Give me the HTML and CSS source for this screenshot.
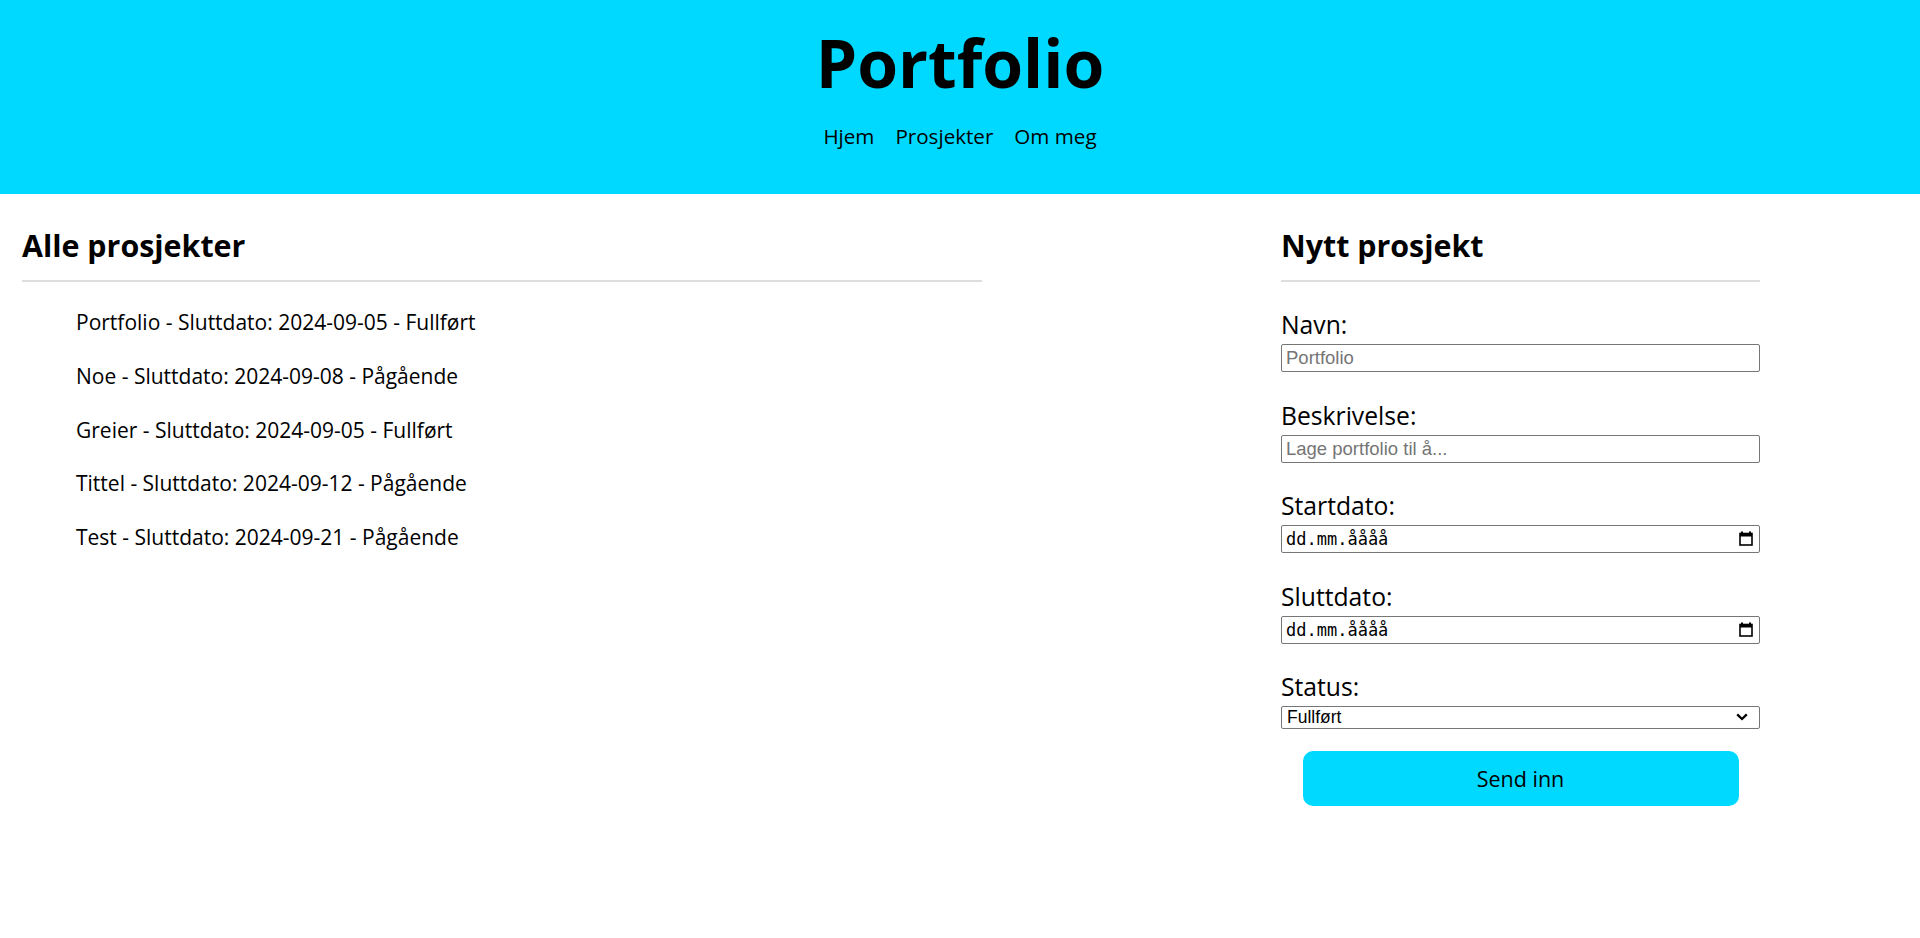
FILE: index.html
```html
<!DOCTYPE html>
<html lang="no">
<head>
<meta charset="utf-8">
<title>Portfolio</title>
<link rel="stylesheet" href="styles.css">
</head>
<body>
<header class="site-header">
  <h1 class="site-title">Portfolio</h1>
  <nav class="site-nav">
    <a class="nav-link" href="#">Hjem</a>
    <a class="nav-link" href="#">Prosjekter</a>
    <a class="nav-link" href="#">Om meg</a>
  </nav>
</header>
<main class="layout">
  <section class="projects">
    <h2 class="section-title">Alle prosjekter</h2>
    <ul class="project-list">
      <li class="project-item">Portfolio - Sluttdato: 2024-09-05 - Fullført</li>
      <li class="project-item">Noe - Sluttdato: 2024-09-08 - Pågående</li>
      <li class="project-item">Greier - Sluttdato: 2024-09-05 - Fullført</li>
      <li class="project-item">Tittel - Sluttdato: 2024-09-12 - Pågående</li>
      <li class="project-item">Test - Sluttdato: 2024-09-21 - Pågående</li>
    </ul>
  </section>
  <section class="new-project">
    <h2 class="section-title">Nytt prosjekt</h2>
    <form class="project-form">
      <div class="field">
        <label class="field-label" for="navn">Navn:</label>
        <input class="text-input" id="navn" type="text" placeholder="Portfolio">
      </div>
      <div class="field">
        <label class="field-label" for="beskrivelse">Beskrivelse:</label>
        <input class="text-input" id="beskrivelse" type="text" placeholder="Lage portfolio til å...">
      </div>
      <div class="field">
        <label class="field-label" for="start">Startdato:</label>
        <div class="control-wrap">
          <input class="text-input date-input" id="start" type="text" value="dd.mm.åååå">
          <svg class="cal-icon" width="14" height="15" viewBox="0 0 14 15"><path d="M3 0.5v2M11 0.5v2" stroke="#000" stroke-width="2" fill="none"/><rect x="1" y="2.5" width="12" height="11.5" fill="none" stroke="#000" stroke-width="1.6"/><rect x="1" y="2.5" width="12" height="3" fill="#000"/></svg>
        </div>
      </div>
      <div class="field">
        <label class="field-label" for="slutt">Sluttdato:</label>
        <div class="control-wrap">
          <input class="text-input date-input" id="slutt" type="text" value="dd.mm.åååå">
          <svg class="cal-icon" width="14" height="15" viewBox="0 0 14 15"><path d="M3 0.5v2M11 0.5v2" stroke="#000" stroke-width="2" fill="none"/><rect x="1" y="2.5" width="12" height="11.5" fill="none" stroke="#000" stroke-width="1.6"/><rect x="1" y="2.5" width="12" height="3" fill="#000"/></svg>
        </div>
      </div>
      <div class="field field-last">
        <label class="field-label" for="status">Status:</label>
        <div class="control-wrap">
          <select class="select-input" id="status">
            <option>Fullført</option>
            <option>Pågående</option>
          </select>
          <svg class="chevron" width="12" height="8" viewBox="0 0 12 8"><path d="M1.2 1.4l4.8 4.6 4.8-4.6" stroke="#000" stroke-width="2.3" fill="none"/></svg>
        </div>
      </div>
      <button class="submit-btn" type="button">Send inn</button>
    </form>
  </section>
</main>
</body>
</html>
```

FILE: styles.css
```css
html, body {
  margin: 0;
  padding: 0;
}

body {
  font-family: "Open Sans", "Noto Sans", sans-serif;
  color: #000;
  background: #fff;
}

.site-header {
  background: #00d9ff;
  padding: 22px 0 43px;
  text-align: center;
}

.site-title {
  margin: 0;
  font-size: 66px;
  line-height: 80px;
  font-weight: 700;
}

.site-nav {
  margin-top: 19px;
  display: flex;
  justify-content: center;
  gap: 21px;
  line-height: 30px;
}

.nav-link {
  color: #000;
  text-decoration: none;
  font-size: 20.6px;
}

.layout {
  display: grid;
  grid-template-columns: 960px 479px;
  column-gap: 299px;
  padding: 32px 0 0 22px;
}

.section-title {
  margin: 0;
  font-size: 30.4px;
  line-height: 40px;
  font-weight: 700;
  padding-bottom: 14px;
  border-bottom: 2px solid #dddddd;
}

.project-list {
  list-style: none;
  margin: 25px 0 0;
  padding: 0 0 0 54px;
}

.project-item {
  font-size: 21px;
  line-height: 30px;
  margin-bottom: 23.8px;
}

.project-form {
  margin-top: 28px;
}

.field {
  margin-bottom: 28.5px;
}

.field-last {
  margin-bottom: 22px;
}

.field-label {
  display: block;
  font-size: 24.7px;
  line-height: 30px;
  margin-bottom: 4px;
}

.control-wrap {
  position: relative;
}

.text-input {
  display: block;
  box-sizing: border-box;
  width: 100%;
  height: 28px;
  margin: 0;
  padding: 0 4px;
  border: 1px solid #767676;
  border-radius: 2px;
  font-family: "Liberation Sans", Arial, sans-serif;
  font-size: 18.5px;
  color: #000;
  background: #fff;
  outline: none;
}

.text-input::placeholder {
  color: #757575;
}

.date-input {
  font-family: "DejaVu Sans Mono", "Liberation Mono", monospace;
  font-size: 17px;
  padding-left: 4px;
}

.cal-icon {
  position: absolute;
  right: 7px;
  top: 6px;
}

.select-input {
  display: block;
  box-sizing: border-box;
  width: 100%;
  height: 23px;
  margin: 0;
  padding: 0 0 0 5px;
  border: 1px solid #767676;
  border-radius: 2px;
  font-family: "Liberation Sans", Arial, sans-serif;
  font-size: 17.5px;
  line-height: 21px;
  color: #000;
  background: #fff;
  appearance: none;
  -webkit-appearance: none;
}

.chevron {
  position: absolute;
  right: 12px;
  top: 7px;
  pointer-events: none;
}

.submit-btn {
  display: block;
  width: 436px;
  height: 55px;
  margin: 0 auto;
  border: none;
  border-radius: 10px;
  background: #00d9ff;
  color: #000;
  font-family: "Open Sans", "Noto Sans", sans-serif;
  font-size: 21.5px;
  font-weight: 500;
  cursor: pointer;
}
```
